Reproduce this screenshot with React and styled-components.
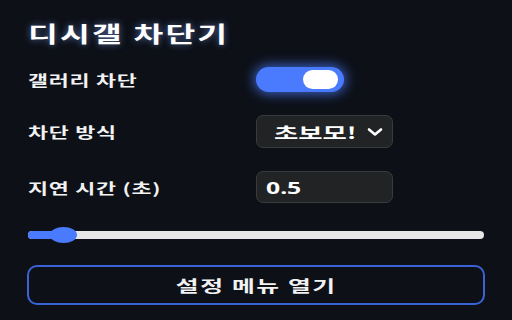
import React, { useState } from 'react';
import styled, { createGlobalStyle } from 'styled-components';

const Global = createGlobalStyle`
  html, body {
    margin: 0;
    padding: 0;
    background: #0d1017;
  }
  * { box-sizing: border-box; }
`;

const Panel = styled.div`
  width: 512px;
  height: 320px;
  padding: 18px 28px 0 28px;
  background: #0d1017;
  color: #fff;
  font-family: "Noto Sans CJK KR", "Noto Sans", sans-serif;
  overflow: hidden;
`;

/* the whole screenshot is stretched sideways, so text is widened */
const Wide = styled.span`
  display: inline-block;
  white-space: nowrap;
  transform: scaleX(${p => p.$x || 1.5});
  transform-origin: ${p => p.$origin || 'left center'};
`;

const Title = styled.h1`
  margin: 0;
  height: 28px;
  font-size: 22px;
  font-weight: 700;
  line-height: 28px;
  letter-spacing: 1.5px;
  color: #fff;
  text-shadow: 0 0 6px rgba(130, 170, 255, 0.6);
`;

const Grid = styled.div`
  display: grid;
  grid-template-columns: 228px 1fr;
  align-items: center;
  margin-top: 21px;
  row-gap: 23px;
`;

const Label = styled.label`
  font-size: 14.5px;
  font-weight: 700;
  color: #f2f2f2;
  letter-spacing: 0.5px;
`;

const Toggle = styled.button`
  position: relative;
  width: 88px;
  height: 25px;
  border: none;
  padding: 0;
  border-radius: 13px;
  background: ${p => (p.$on ? '#4a7bff' : '#444')};
  box-shadow: ${p => (p.$on ? '0 0 12px 2px rgba(74, 123, 255, 0.75)' : 'none')};
  cursor: pointer;
`;

const Knob = styled.span`
  position: absolute;
  top: 3px;
  left: ${p => (p.$on ? '47px' : '4px')};
  width: 35px;
  height: 19px;
  border-radius: 10px;
  background: #fff;
`;

const SelectBox = styled.div`
  display: flex;
  align-items: center;
  justify-content: space-between;
  width: 137px;
  height: 33px;
  padding: 0 8px 0 17px;
  background: #222325;
  border: 1px solid #3a3b3e;
  border-radius: 7px;
  font-size: 16px;
  font-weight: 700;
  color: #fff;
  overflow: hidden;
`;

const Field = styled.div`
  display: flex;
  align-items: center;
  width: 137px;
  height: 32px;
  padding: 0 9px;
  background: #222325;
  border: 1px solid #3a3b3e;
  border-radius: 7px;
  font-family: "Noto Sans", sans-serif;
  font-size: 16.5px;
  font-weight: 700;
  color: #fff;
`;

const SliderWrap = styled.div`
  height: 20px;
  margin-top: 22px;
  display: flex;
  align-items: center;
`;

const Track = styled.div`
  position: relative;
  width: 100%;
  height: 8px;
  border-radius: 4px;
  background: #e6e6e6;
`;

const Fill = styled.div`
  position: absolute;
  left: 0;
  top: 0;
  bottom: 0;
  border-radius: 4px;
  background: #4a7bff;
`;

const Thumb = styled.div`
  position: absolute;
  top: 50%;
  width: 27px;
  height: 16px;
  margin-left: -13px;
  margin-top: -8px;
  border-radius: 50%;
  background: #4a7bff;
`;

const OpenButton = styled.button`
  display: block;
  width: 458px;
  height: 40px;
  margin: 20px 0 0 -1px;
  background: transparent;
  border: 2px solid #3a63d6;
  border-radius: 10px;
  color: #f2f2f2;
  font-family: "Noto Sans CJK KR", "Noto Sans", sans-serif;
  font-size: 15.5px;
  font-weight: 700;
  letter-spacing: 1px;
  cursor: pointer;
`;

function Chevron() {
  return (
    <svg width="18" height="12" viewBox="0 0 18 12" fill="none" stroke="#fff" strokeWidth="2.6" strokeLinecap="round" strokeLinejoin="round">
      <path d="M3 3.5l6 5 6-5" />
    </svg>
  );
}

export default function App() {
  const [on, setOn] = useState(true);
  const pct = 7.7;
  return (
    <Panel>
      <Global />
      <Title><Wide $x={1.47}>디시갤 차단기</Wide></Title>
      <Grid>
        <Label><Wide>갤러리 차단</Wide></Label>
        <Toggle $on={on} onClick={() => setOn(!on)}>
          <Knob $on={on} />
        </Toggle>
        <Label><Wide>차단 방식</Wide></Label>
        <SelectBox>
          <Wide $x={1.65}>초보모!</Wide>
          <Chevron />
        </SelectBox>
        <Label><Wide>지연 시간 (초)</Wide></Label>
        <Field><Wide $x={1.5}>0.5</Wide></Field>
      </Grid>
      <SliderWrap>
        <Track>
          <Fill style={{ width: `${pct}%` }} />
          <Thumb style={{ left: `${pct}%` }} />
        </Track>
      </SliderWrap>
      <OpenButton><Wide $x={1.6} $origin="center">설정 메뉴 열기</Wide></OpenButton>
    </Panel>
  );
}
